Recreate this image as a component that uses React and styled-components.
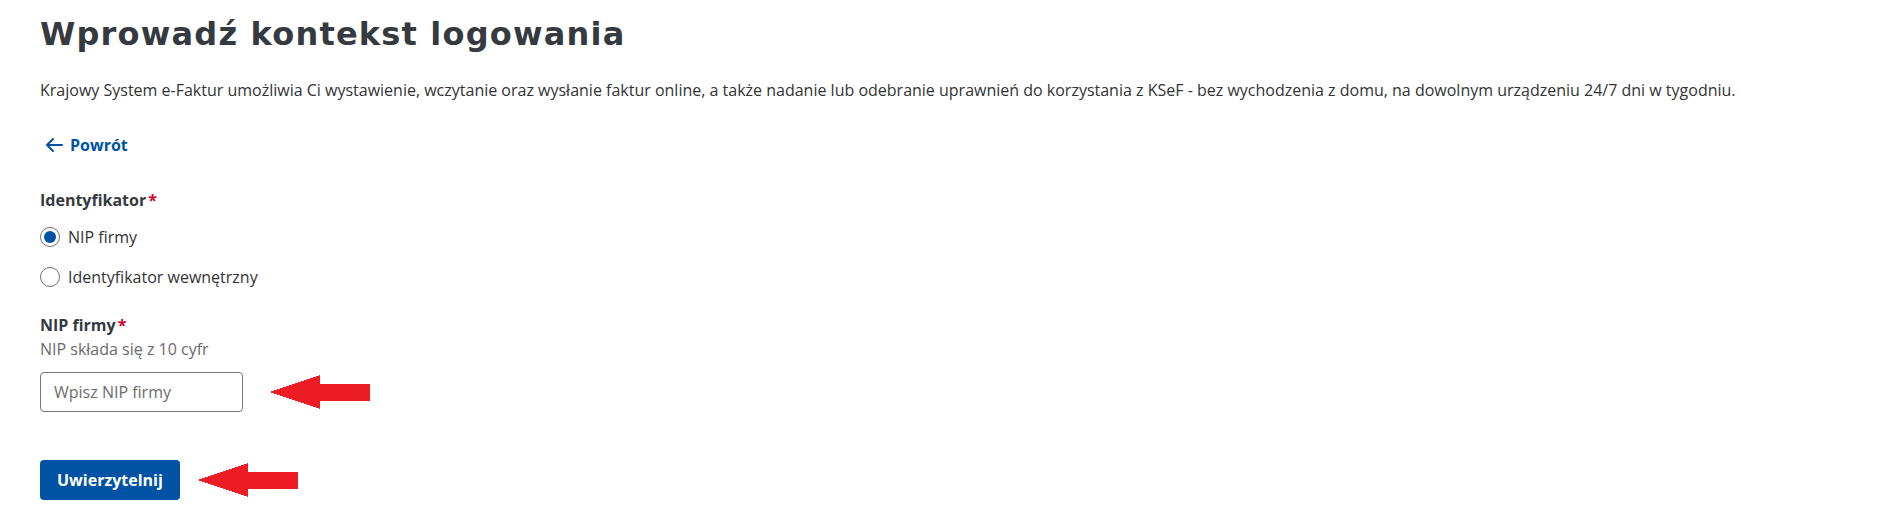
import React from "react";
import styled, { createGlobalStyle } from "styled-components";

const GlobalStyle = createGlobalStyle`
  html, body {
    margin: 0;
    padding: 0;
    background: #ffffff;
  }
  body {
    font-family: "Open Sans", "Noto Sans", sans-serif;
    color: #333333;
  }
  * { box-sizing: border-box; }
`;

const Page = styled.main`
  padding: 14px 40px 0 40px;
  display: flex;
  flex-direction: column;
  align-items: flex-start;
`;

const Title = styled.h1`
  margin: 0;
  font-family: "DejaVu Sans", "Inter", sans-serif;
  font-weight: 700;
  font-size: 32px;
  letter-spacing: 1.2px;
  line-height: 40px;
  color: #343a40;
`;

const Lead = styled.p`
  margin: 24px 0 0 0;
  font-size: 16px;
  line-height: 24px;
  color: #333333;
`;

const BackLink = styled.a`
  margin-top: 31px;
  display: inline-flex;
  align-items: center;
  gap: 7px;
  font-weight: 700;
  font-size: 16px;
  line-height: 24px;
  color: #0052a5;
  text-decoration: none;
  padding-left: 5px;
  cursor: pointer;
`;

const Fieldset = styled.fieldset`
  margin: ${(p) => p.$mt}px 0 0 0;
  padding: 0;
  border: none;
  display: flex;
  flex-direction: column;
`;

const Label = styled.span`
  font-weight: 700;
  font-size: 16px;
  line-height: 24px;
  color: #343a40;
`;

const Star = styled.span`
  color: #d4002a;
  margin-left: 2px;
`;

const RadioRow = styled.label`
  margin-top: ${(p) => p.$mt}px;
  display: flex;
  align-items: center;
  gap: 8px;
  font-size: 16px;
  line-height: 24px;
  color: #333333;
  cursor: pointer;
`;

const RadioCircle = styled.span`
  width: 20px;
  height: 20px;
  border-radius: 50%;
  border: 1px solid #6f6f6f;
  background: #ffffff;
  display: flex;
  align-items: center;
  justify-content: center;
  flex-shrink: 0;
  &::after {
    content: "";
    width: 12px;
    height: 12px;
    border-radius: 50%;
    background: ${(p) => (p.$checked ? "#0052a5" : "transparent")};
  }
`;

const Hint = styled.span`
  font-size: 16px;
  line-height: 24px;
  color: #6a6a6a;
`;

const AnnotatedRow = styled.div`
  margin-top: ${(p) => p.$mt}px;
  display: flex;
  align-items: center;
  gap: ${(p) => p.$gap}px;
`;

const Input = styled.input`
  width: 203px;
  height: 40px;
  padding: 0 13px;
  border: 1px solid #767676;
  border-radius: 4px;
  font-family: "Open Sans", sans-serif;
  font-size: 16px;
  color: #333333;
  outline: none;
  &::placeholder {
    color: #6c6c6c;
  }
`;

const Button = styled.button`
  height: 40px;
  padding: 0 17px;
  border: none;
  border-radius: 4px;
  background: #0052a5;
  color: #ffffff;
  font-family: "Open Sans", sans-serif;
  font-weight: 700;
  font-size: 16px;
  cursor: pointer;
`;

const ArrowLeftIcon = () => (
  <svg width="18" height="16" viewBox="0 0 18 16" fill="none">
    <path d="M17 8H2M8 2L2 8L8 14" stroke="#0052a5" strokeWidth="2" strokeLinecap="round" strokeLinejoin="round" />
  </svg>
);

const RedArrow = () => (
  <svg width="100" height="34" viewBox="0 0 100 34" shapeRendering="crispEdges">
    <polygon points="0,17 50,0 50,34" fill="#ed1c24" />
    <rect x="49" y="8.5" width="51" height="17" fill="#ed1c24" />
  </svg>
);

export default function App() {
  return (
    <>
      <GlobalStyle />
      <Page>
        <Title>Wprowadź kontekst logowania</Title>
        <Lead>
          Krajowy System e-Faktur umożliwia Ci wystawienie, wczytanie oraz wysłanie faktur online, a także nadanie lub odebranie uprawnień do korzystania z KSeF - bez wychodzenia z domu, na dowolnym urządzeniu 24/7 dni w tygodniu.
        </Lead>
        <BackLink>
          <ArrowLeftIcon />
          Powrót
        </BackLink>
        <Fieldset $mt={31}>
          <Label>
            Identyfikator<Star>*</Star>
          </Label>
          <RadioRow $mt={13}>
            <RadioCircle $checked />
            NIP firmy
          </RadioRow>
          <RadioRow $mt={16}>
            <RadioCircle />
            Identyfikator wewnętrzny
          </RadioRow>
        </Fieldset>
        <Fieldset $mt={24}>
          <Label>
            NIP firmy<Star>*</Star>
          </Label>
          <Hint>NIP składa się z 10 cyfr</Hint>
          <AnnotatedRow $mt={11} $gap={27}>
            <Input placeholder="Wpisz NIP firmy" />
            <RedArrow />
          </AnnotatedRow>
        </Fieldset>
        <AnnotatedRow $mt={48} $gap={18}>
          <Button>Uwierzytelnij</Button>
          <RedArrow />
        </AnnotatedRow>
      </Page>
    </>
  );
}
